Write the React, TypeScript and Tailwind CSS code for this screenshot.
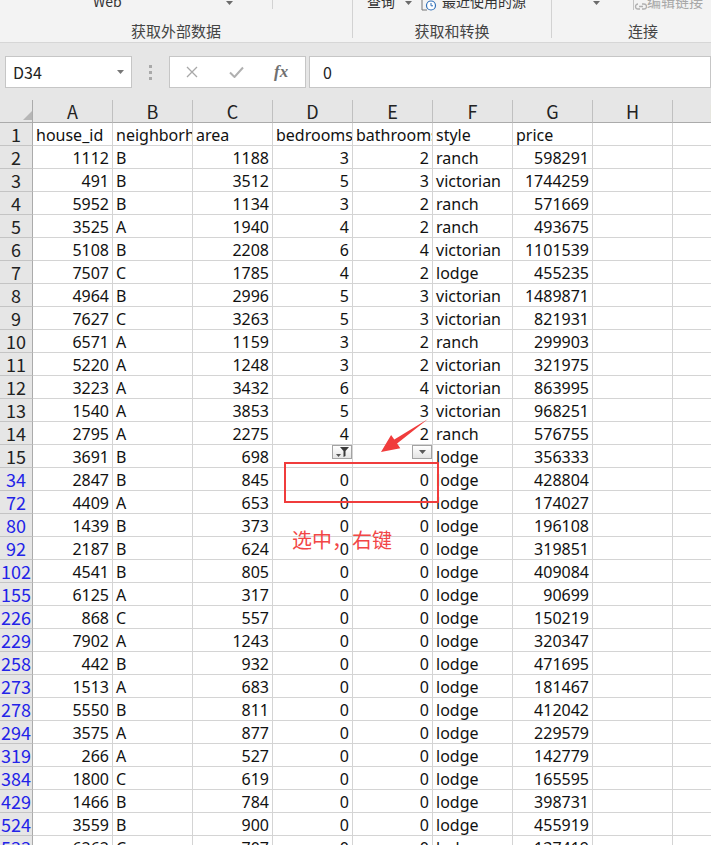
import React from "react";

const FONT = '"Noto Sans CJK SC", "Noto Sans", sans-serif';
const DATA_FONT = '"Noto Sans", "Noto Sans CJK SC", sans-serif';

type R = { h: string; blue?: boolean; c: string[] };

const rows: R[] = [
  { h: "2", c: ["1112", "B", "1188", "3", "2", "ranch", "598291"] },
  { h: "3", c: ["491", "B", "3512", "5", "3", "victorian", "1744259"] },
  { h: "4", c: ["5952", "B", "1134", "3", "2", "ranch", "571669"] },
  { h: "5", c: ["3525", "A", "1940", "4", "2", "ranch", "493675"] },
  { h: "6", c: ["5108", "B", "2208", "6", "4", "victorian", "1101539"] },
  { h: "7", c: ["7507", "C", "1785", "4", "2", "lodge", "455235"] },
  { h: "8", c: ["4964", "B", "2996", "5", "3", "victorian", "1489871"] },
  { h: "9", c: ["7627", "C", "3263", "5", "3", "victorian", "821931"] },
  { h: "10", c: ["6571", "A", "1159", "3", "2", "ranch", "299903"] },
  { h: "11", c: ["5220", "A", "1248", "3", "2", "victorian", "321975"] },
  { h: "12", c: ["3223", "A", "3432", "6", "4", "victorian", "863995"] },
  { h: "13", c: ["1540", "A", "3853", "5", "3", "victorian", "968251"] },
  { h: "14", c: ["2795", "A", "2275", "4", "2", "ranch", "576755"] },
  { h: "15", c: ["3691", "B", "698", "", "", "lodge", "356333"] },
  { h: "34", blue: true, c: ["2847", "B", "845", "0", "0", "lodge", "428804"] },
  { h: "72", blue: true, c: ["4409", "A", "653", "0", "0", "lodge", "174027"] },
  { h: "80", blue: true, c: ["1439", "B", "373", "0", "0", "lodge", "196108"] },
  { h: "92", blue: true, c: ["2187", "B", "624", "0", "0", "lodge", "319851"] },
  { h: "102", blue: true, c: ["4541", "B", "805", "0", "0", "lodge", "409084"] },
  { h: "155", blue: true, c: ["6125", "A", "317", "0", "0", "lodge", "90699"] },
  { h: "226", blue: true, c: ["868", "C", "557", "0", "0", "lodge", "150219"] },
  { h: "229", blue: true, c: ["7902", "A", "1243", "0", "0", "lodge", "320347"] },
  { h: "258", blue: true, c: ["442", "B", "932", "0", "0", "lodge", "471695"] },
  { h: "273", blue: true, c: ["1513", "A", "683", "0", "0", "lodge", "181467"] },
  { h: "278", blue: true, c: ["5550", "B", "811", "0", "0", "lodge", "412042"] },
  { h: "294", blue: true, c: ["3575", "A", "877", "0", "0", "lodge", "229579"] },
  { h: "319", blue: true, c: ["266", "A", "527", "0", "0", "lodge", "142779"] },
  { h: "384", blue: true, c: ["1800", "C", "619", "0", "0", "lodge", "165595"] },
  { h: "429", blue: true, c: ["1466", "B", "784", "0", "0", "lodge", "398731"] },
  { h: "524", blue: true, c: ["3559", "B", "900", "0", "0", "lodge", "455919"] },
  { h: "533", blue: true, c: ["6262", "C", "707", "0", "0", "lodge", "137419"] },
];

const header = ["house_id", "neighborhood", "area", "bedrooms", "bathrooms", "style", "price"];
const letters = ["A", "B", "C", "D", "E", "F", "G", "H", "I"];
const rightCols = [0, 2, 3, 4, 6];

function Caret({ color = "#6b6b6b" }: { color?: string }) {
  return (
    <svg width="7" height="4" viewBox="0 0 7 4">
      <polygon points="0,0 7,0 3.5,4" fill={color} />
    </svg>
  );
}

function FilterBtn({ funnel }: { funnel?: boolean }) {
  return (
    <div className="absolute top-0 right-0 w-[20px] h-[14px] border border-[#a3a3a3] bg-gradient-to-b from-[#ffffff] to-[#e4e4e4] flex items-center justify-center">
      {funnel ? (
        <svg width="18" height="12" viewBox="0 0 18 12">
          <polygon points="7,1 16,1 12.5,5 12.5,10 10.5,11 10.5,5" fill="#3a3a3a" />
          <polygon points="3,8 8,8 5.5,11" fill="#555" />
        </svg>
      ) : (
        <Caret color="#5a5a5a" />
      )}
    </div>
  );
}

function DataCell({ v, right, filter }: { v: string; right: boolean; filter?: "f" | "c" }) {
  return (
    <div
      className={`relative w-[80px] h-[23px] shrink-0 border-r border-b border-[#d4d4d4] px-[3px] pt-[2px] text-[16px] leading-[20px] overflow-hidden whitespace-nowrap text-[#111] ${
        right ? "text-right" : "text-left"
      }`}
      style={{ fontFamily: DATA_FONT }}
    >
      {v}
      {filter === "f" && <FilterBtn funnel />}
      {filter === "c" && <FilterBtn />}
    </div>
  );
}

function RowHead({ v, blue }: { v: string; blue?: boolean }) {
  return (
    <div
      className={`w-[33px] h-[23px] shrink-0 bg-[#e6e6e6] border-r border-b border-r-[#ababab] border-b-[#c4c4c4] text-center text-[18px] leading-[22px] overflow-hidden ${
        blue ? "text-[#2323e8]" : "text-[#222]"
      }`}
    >
      {v}
    </div>
  );
}

export default function App() {
  return (
    <div
      className="relative w-[711px] h-[845px] overflow-hidden bg-white"
      style={{ fontFamily: FONT }}
    >
      {/* Ribbon */}
      <div className="h-[43px] bg-[#f3f3f3] border-b border-[#d6d6d6] flex overflow-hidden text-[#333]">
        <div className="w-[353px] shrink-0 h-[38px] border-r border-[#d2d2d2] flex flex-col">
          <div className="h-[9px] shrink-0 flex items-end">
            <div className="w-[273px] h-[9px] border-r border-[#d2d2d2] flex items-end">
              <span className="ml-[93px] w-[133px] text-[14px] leading-[16px]">Web</span>
              <span className="mb-[4px]">
                <Caret />
              </span>
            </div>
          </div>
          <div className="mt-[12px] h-[20px] shrink-0 leading-[20px] text-center text-[15px] text-[#444]">获取外部数据</div>
        </div>
        <div className="w-[199px] shrink-0 h-[38px] border-r border-[#d2d2d2] flex flex-col">
          <div className="h-[9px] shrink-0 flex items-end">
            <span className="ml-[14px] w-[38px] text-[14px] leading-[16px]">查询</span>
            <span className="mb-[4px] w-[16px]">
              <Caret />
            </span>
            <svg width="20" height="14" viewBox="0 0 20 14" className="mb-[-3px] mr-[1px]">
              <path d="M1 0 V12 H6" stroke="#777" strokeWidth="1" fill="none" />
              <circle cx="10" cy="7.5" r="4.5" stroke="#2f6fb8" strokeWidth="1.2" fill="#fff" />
              <path d="M10 5 V7.8 H12" stroke="#2f6fb8" strokeWidth="1" fill="none" />
            </svg>
            <span className="text-[14px] leading-[16px]">最近使用的源</span>
          </div>
          <div className="mt-[12px] h-[20px] shrink-0 leading-[20px] text-center text-[15px] text-[#444]">获取和转换</div>
        </div>
        <div className="w-[182px] shrink-0 h-[38px] flex flex-col">
          <div className="h-[9px] shrink-0 flex items-end">
            <span className="ml-[41px] mb-[4px] w-[40px]">
              <Caret />
            </span>
            <svg width="14" height="12" viewBox="0 0 14 12" className="mb-[-2px]">
              <path d="M0.5 0 V11" stroke="#c4c4c4" strokeWidth="1" />
              <path d="M5 5 a2.5 2.5 0 0 0 0 5 h2 M9 5 h2 a2.5 2.5 0 0 1 0 5 h-2 M6 7.5 h4" stroke="#b0b0b0" strokeWidth="1.3" fill="none" />
            </svg>
            <span className="text-[14px] leading-[16px] text-[#a8a8a8]">编辑链接</span>
          </div>
          <div className="mt-[12px] h-[20px] shrink-0 leading-[20px] text-center text-[15px] text-[#444]">连接</div>
        </div>
      </div>

      {/* Formula bar */}
      <div className="h-[57px] bg-[#e6e6e6] flex pt-[13px] pl-[5px]">
        <div className="w-[127px] h-[32px] bg-white border border-[#c6c6c6] flex items-center justify-between pl-[7px] pr-[7px]">
          <span className="text-[16px] text-[#222] leading-[20px]">D34</span>
          <Caret color="#777" />
        </div>
        <div className="w-[37px] h-[32px] flex flex-col items-center justify-center gap-[3px]">
          <div className="w-[3px] h-[3px] bg-[#a9a9a9]" />
          <div className="w-[3px] h-[3px] bg-[#a9a9a9]" />
          <div className="w-[3px] h-[3px] bg-[#a9a9a9]" />
        </div>
        <div className="w-[137px] h-[32px] bg-white border border-[#c6c6c6] flex items-center">
          <svg width="12" height="12" viewBox="0 0 12 12" className="ml-[16px]">
            <path d="M1 1 L11 11 M11 1 L1 11" stroke="#a8a8a8" strokeWidth="1.3" />
          </svg>
          <svg width="15" height="12" viewBox="0 0 15 12" className="ml-[31px]">
            <path d="M1 6.5 L5.5 11 L14 1.5" stroke="#b0b0b0" strokeWidth="2" fill="none" />
          </svg>
          <span
            className="ml-[30px] text-[17px] italic font-bold text-[#707070] leading-[20px]"
            style={{ fontFamily: '"Liberation Serif", serif' }}
          >
            fx
          </span>
        </div>
        <div className="ml-[3px] flex-1 h-[32px] bg-white border border-[#c6c6c6] flex items-center pl-[13px]">
          <span className="text-[16px] text-[#222] leading-[20px]">0</span>
        </div>
      </div>

      {/* Column headers */}
      <div className="flex h-[23px]">
        <div className="w-[33px] h-[23px] shrink-0 bg-[#e6e6e6] border-r border-b border-[#ababab] flex items-end justify-end pb-[2px]">
          <svg width="9" height="9" viewBox="0 0 9 9">
            <polygon points="9,0 9,9 0,9" fill="#b6b6b6" />
          </svg>
        </div>
        {letters.map((l) => (
          <div
            key={l}
            className="w-[80px] h-[23px] shrink-0 bg-[#e6e6e6] border-r border-b border-r-[#c0c0c0] border-b-[#ababab] text-center text-[18px] leading-[22px] text-[#222]"
          >
            {l}
          </div>
        ))}
      </div>

      {/* Header row 1 */}
      <div className="flex">
        <RowHead v="1" />
        {header.map((h, i) => (
          <DataCell key={i} v={h} right={false} />
        ))}
        <DataCell v="" right={false} />
        <DataCell v="" right={false} />
      </div>

      {rows.map((r) => (
        <div key={r.h} className="flex">
          <RowHead v={r.h} blue={r.blue} />
          {r.c.map((v, i) => (
            <DataCell
              key={i}
              v={v}
              right={rightCols.includes(i)}
              filter={r.h === "15" && i === 3 ? "f" : r.h === "15" && i === 4 ? "c" : undefined}
            />
          ))}
          <DataCell v="" right={false} />
          <DataCell v="" right={false} />
        </div>
      ))}

      {/* Annotation overlay */}
      <div className="absolute left-[284px] top-[462px] w-[155px] h-[41px] border-2 border-[#f03c3c] pointer-events-none" />
      <svg className="absolute left-0 top-0 pointer-events-none" width="711" height="845" viewBox="0 0 711 845">
        <polygon
          points="428,419 397.1,443.6 400.3,448.2 381,452 391.1,435 394.3,439.6"
          fill="#f03c3c"
        />
      </svg>
      <div className="absolute left-[292px] top-[527px] text-[20px] leading-[26px] text-[#f24646] whitespace-nowrap pointer-events-none">
        选中，右键
      </div>
    </div>
  );
}
